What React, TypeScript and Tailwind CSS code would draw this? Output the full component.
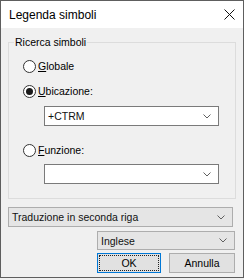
import React from 'react';

const Chevron = () => (
  <svg width="8" height="5" viewBox="0 0 8 5" className="shrink-0">
    <path d="M0.5 0.5 L4 4 L7.5 0.5" fill="none" stroke="#606060" strokeWidth="1" />
  </svg>
);

const Radio = ({ checked }: { checked?: boolean }) => (
  <span className="w-[13px] h-[13px] rounded-full border border-[#333] bg-white flex items-center justify-center shrink-0">
    {checked && <span className="w-[7px] h-[7px] rounded-full bg-[#1a1a1a]" />}
  </span>
);

const Combo = ({ value, gray, className }: { value?: string; gray?: boolean; className: string }) => (
  <div
    className={
      'flex items-center justify-between pl-[3px] pr-[7px] border ' +
      (gray ? 'bg-[#e5e5e5] border-[#adadad] ' : 'bg-white border-[#7a7a7a] ') +
      className
    }
  >
    <span className="text-[#111]">{value}</span>
    <Chevron />
  </div>
);

export default function App() {
  return (
    <div
      className="w-[244px] h-[280px] bg-[#f0f0f0] text-[10.5px] leading-[14px] text-black"
      style={{ fontFamily: '"Liberation Sans", Arial, sans-serif' }}
    >
      <div className="w-[244px] h-[278px] border border-[#5e5e5e] flex flex-col">
        {/* Title bar */}
        <div className="h-[27px] bg-white flex items-center justify-between pl-[8px] pr-[8px] shrink-0">
          <span className="text-[12px]">Legenda simboli</span>
          <svg width="11" height="11" viewBox="0 0 11 11">
            <path d="M0.5 0.5 L10.5 10.5 M10.5 0.5 L0.5 10.5" stroke="#111" strokeWidth="1" />
          </svg>
        </div>

        {/* Body */}
        <div className="flex-1 px-[7px] flex flex-col">
          <fieldset className="mt-[7px] border border-[#dcdcdc] h-[164px] m-0 p-0">
            <legend className="ml-[5px] px-[1px]">Ricerca simboli</legend>
            <div className="flex flex-col pt-[10px]">
              <div className="flex items-center gap-[2px] ml-[14px]">
                <Radio />
                <span>
                  <span className="underline">G</span>lobale
                </span>
              </div>
              <div className="flex items-center gap-[2px] ml-[14px] mt-[11px]">
                <Radio checked />
                <span>
                  <span className="underline">U</span>bicazione:
                </span>
              </div>
              <Combo value="+CTRM" className="ml-[35px] mt-[8px] w-[175px] h-[20px]" />
              <div className="flex items-center gap-[2px] ml-[14px] mt-[17px]">
                <Radio />
                <span>
                  <span className="underline">F</span>unzione:
                </span>
              </div>
              <Combo className="ml-[35px] mt-[7px] w-[175px] h-[20px]" />
            </div>
          </fieldset>

          <Combo value="Traduzione in seconda riga" gray className="mt-[8px] w-[225px] h-[20px]" />
          <div className="flex justify-end mt-[4px]">
            <Combo value="Inglese" gray className="w-[138px] h-[19px] mr-[1px]" />
          </div>
          <div className="flex justify-end gap-[8px] mt-[3px] mr-[1px]">
            <button className="w-[64px] h-[20px] bg-[#e1e1e1] border border-[#0078d7] p-[1px]">
              <span className="flex items-center justify-center w-full h-full border border-dotted border-[#222]">OK</span>
            </button>
            <button className="w-[66px] h-[20px] bg-[#e1e1e1] border border-[#adadad]">Annulla</button>
          </div>
        </div>
      </div>
    </div>
  );
}
